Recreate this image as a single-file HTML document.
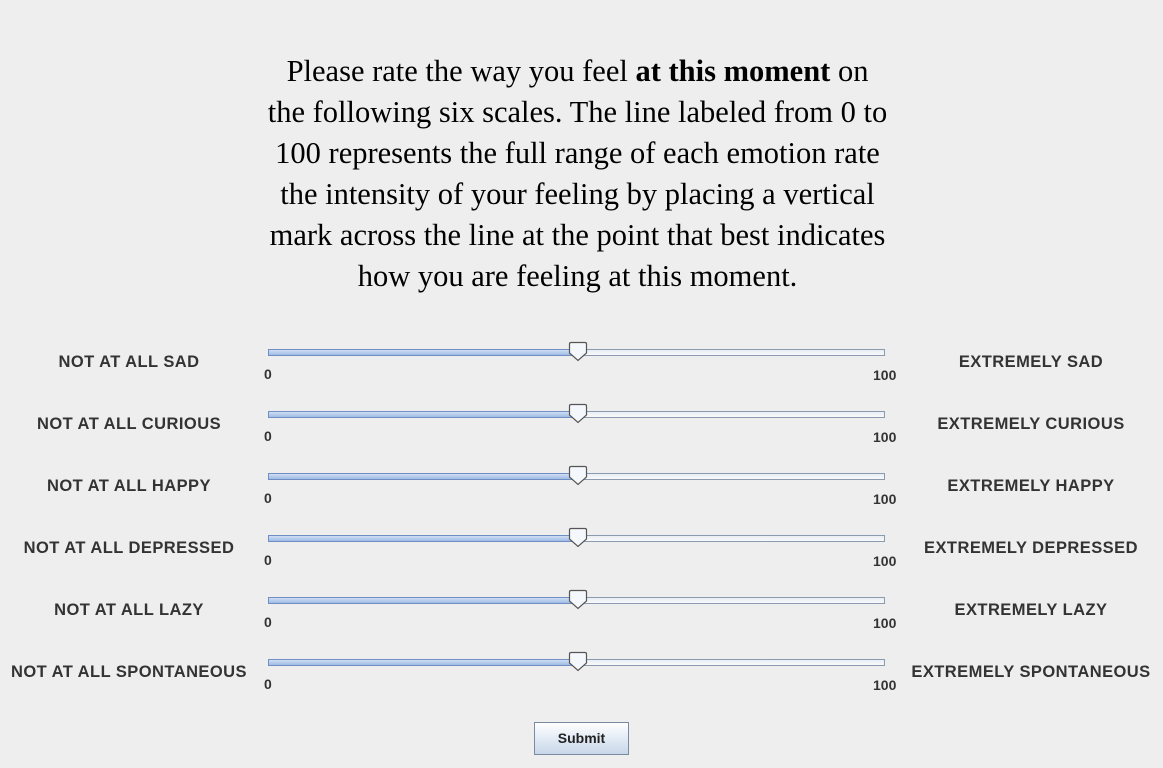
<!DOCTYPE html>
<html><head><style>
body{margin:0;width:1163px;height:768px;background:#eeeeee;position:relative;overflow:hidden;font-family:"Liberation Sans",sans-serif;}
.h{position:absolute;left:0;width:1155px;top:51px;text-align:center;font-family:"Liberation Serif",serif;font-size:30.5px;line-height:41px;color:#000;}
.row{position:absolute;left:0;width:1163px;height:60px;}
.l,.r{position:absolute;font-weight:bold;font-size:16.5px;letter-spacing:0.45px;color:#333;width:300px;text-align:center;top:4px;}
.l{left:-21px}.r{left:881px}
.tr{position:absolute;left:268px;width:615px;top:0;height:5px;border:1px solid #8a9bb0;background:linear-gradient(#e8edf4,#f8f9fb);}
.fill{position:absolute;left:268px;width:310px;top:0;height:5px;border:1px solid #6f8fc4;background:linear-gradient(#d0def3,#9fbbe5);}
.n{position:absolute;font-weight:bold;font-size:14px;color:#333;}
svg{position:absolute;left:568px;top:-8px}
.btn{position:absolute;left:534px;top:722px;width:93px;height:31px;border:1px solid #7a8aa3;background:linear-gradient(#ffffff,#dde7f3 60%,#c8d6e8);font-weight:bold;font-size:14px;text-align:center;line-height:31px;color:#222;}
</style></head><body>
<div class="h">Please rate the way you feel <b>at this moment</b> on<br>the following six scales. The line labeled from 0 to<br>100 represents the full range of each emotion rate<br>the intensity of your feeling by placing a vertical<br>mark across the line at the point that best indicates<br>how you are feeling at this moment.</div>

<div class="row" style="top:349px"><div class="l">NOT AT ALL SAD</div><div class="tr"></div><div class="fill"></div><svg width="20" height="21"><path d="M1.5 3Q1.5 1.5 3 1.5H17Q18.5 1.5 18.5 3V12L10 19.5L1.5 12Z" fill="#f4f7fb" stroke="#555" stroke-width="1.2"/></svg><div class="n" style="left:264px;top:17px">0</div><div class="n" style="left:873px;top:18px">100</div><div class="r">EXTREMELY SAD</div></div>
<div class="row" style="top:411px"><div class="l">NOT AT ALL CURIOUS</div><div class="tr"></div><div class="fill"></div><svg width="20" height="21"><path d="M1.5 3Q1.5 1.5 3 1.5H17Q18.5 1.5 18.5 3V12L10 19.5L1.5 12Z" fill="#f4f7fb" stroke="#555" stroke-width="1.2"/></svg><div class="n" style="left:264px;top:17px">0</div><div class="n" style="left:873px;top:18px">100</div><div class="r">EXTREMELY CURIOUS</div></div>
<div class="row" style="top:473px"><div class="l">NOT AT ALL HAPPY</div><div class="tr"></div><div class="fill"></div><svg width="20" height="21"><path d="M1.5 3Q1.5 1.5 3 1.5H17Q18.5 1.5 18.5 3V12L10 19.5L1.5 12Z" fill="#f4f7fb" stroke="#555" stroke-width="1.2"/></svg><div class="n" style="left:264px;top:17px">0</div><div class="n" style="left:873px;top:18px">100</div><div class="r">EXTREMELY HAPPY</div></div>
<div class="row" style="top:535px"><div class="l">NOT AT ALL DEPRESSED</div><div class="tr"></div><div class="fill"></div><svg width="20" height="21"><path d="M1.5 3Q1.5 1.5 3 1.5H17Q18.5 1.5 18.5 3V12L10 19.5L1.5 12Z" fill="#f4f7fb" stroke="#555" stroke-width="1.2"/></svg><div class="n" style="left:264px;top:17px">0</div><div class="n" style="left:873px;top:18px">100</div><div class="r">EXTREMELY DEPRESSED</div></div>
<div class="row" style="top:597px"><div class="l">NOT AT ALL LAZY</div><div class="tr"></div><div class="fill"></div><svg width="20" height="21"><path d="M1.5 3Q1.5 1.5 3 1.5H17Q18.5 1.5 18.5 3V12L10 19.5L1.5 12Z" fill="#f4f7fb" stroke="#555" stroke-width="1.2"/></svg><div class="n" style="left:264px;top:17px">0</div><div class="n" style="left:873px;top:18px">100</div><div class="r">EXTREMELY LAZY</div></div>
<div class="row" style="top:659px"><div class="l">NOT AT ALL SPONTANEOUS</div><div class="tr"></div><div class="fill"></div><svg width="20" height="21"><path d="M1.5 3Q1.5 1.5 3 1.5H17Q18.5 1.5 18.5 3V12L10 19.5L1.5 12Z" fill="#f4f7fb" stroke="#555" stroke-width="1.2"/></svg><div class="n" style="left:264px;top:17px">0</div><div class="n" style="left:873px;top:18px">100</div><div class="r">EXTREMELY SPONTANEOUS</div></div>

<div class="btn">Submit</div>
</body></html>
